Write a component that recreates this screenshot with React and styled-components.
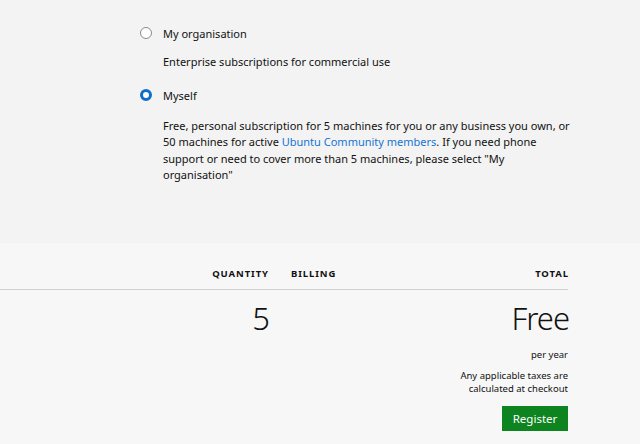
import React from "react";
import styled, { createGlobalStyle } from "styled-components";

const GlobalStyle = createGlobalStyle`
  html, body {
    margin: 0;
    padding: 0;
    background: #f7f7f7;
    font-family: "Noto Sans", "Open Sans", sans-serif;
    color: #111;
  }
`;

const App = () => {
  return (
    <>
      <GlobalStyle />
      <Page>
        <ChoiceSection>
          <Choice>
            <Radio checked={false} />
            <ChoiceLabel>My organisation</ChoiceLabel>
          </Choice>
          <ChoiceText gap="11px 0 18px">
            Enterprise subscriptions for commercial use
          </ChoiceText>
          <Choice>
            <Radio checked />
            <ChoiceLabel>Myself</ChoiceLabel>
          </Choice>
          <ChoiceText gap="13px 0 0">
            Free, personal subscription for 5 machines for you or any business
            you own, or 50 machines for active{" "}
            <Link href="#">Ubuntu Community members</Link>. If you need phone
            support or need to cover more than 5 machines, please select "My
            organisation"
          </ChoiceText>
        </ChoiceSection>
        <SummarySection>
          <SummaryGrid>
            <HeadCell />
            <HeadCell align="right">Quantity</HeadCell>
            <HeadCell>Billing</HeadCell>
            <HeadCell align="right">Total</HeadCell>
            <Divider />
            <div />
            <BigValue>5</BigValue>
            <div />
            <TotalCol>
              <BigValue>Free</BigValue>
              <PerYear>per year</PerYear>
              <TaxNote>
                Any applicable taxes are
                <br />
                calculated at checkout
              </TaxNote>
              <RegisterBtn>Register</RegisterBtn>
            </TotalCol>
          </SummaryGrid>
        </SummarySection>
      </Page>
    </>
  );
};

const Page = styled.main`
  width: 640px;
  height: 444px;
  overflow: hidden;
`;
const ChoiceSection = styled.section`
  background: #f3f3f3;
  padding: 26px 0 0 163px;
  height: 243px;
  box-sizing: border-box;
`;
const Choice = styled.label`
  position: relative;
  display: block;
  font-size: 11px;
  line-height: 16.5px;
`;
const Radio = styled.span`
  position: absolute;
  left: -23px;
  top: 1px;
  width: 12px;
  height: 12px;
  box-sizing: border-box;
  border-radius: 50%;
  background: #fff;
  border: ${({ checked }) =>
    checked ? "3.5px solid #0f6ec8" : "1px solid #8a8a8a"};
`;
const ChoiceLabel = styled.span``;
const ChoiceText = styled.p`
  margin: ${({ gap }) => gap};
  font-size: 11px;
  line-height: 16.5px;
  max-width: 410px;
`;
const Link = styled.a`
  color: #1574d4;
  text-decoration: none;
`;
const SummarySection = styled.section`
  background: #f7f7f7;
  padding-top: 23px;
`;
const SummaryGrid = styled.div`
  display: grid;
  width: 568px;
  grid-template-columns: 177px 68px 1fr auto;
  column-gap: 23px;
`;
const HeadCell = styled.div`
  font-size: 9.5px;
  font-weight: 700;
  letter-spacing: 0.9px;
  text-transform: uppercase;
  text-align: ${({ align }) => align || "left"};
  line-height: 16px;
  padding-bottom: 7px;
  margin-right: ${({ align }) => (align === "right" ? "-0.9px" : "0")};
`;
const Divider = styled.div`
  grid-column: 1 / -1;
  height: 1px;
  background: #d0d0d0;
`;
const BigValue = styled.div`
  font-size: 31px;
  font-weight: 300;
  letter-spacing: -1px;
  margin-right: -1px;
  line-height: 40px;
  margin-top: 7.5px;
  text-align: right;
`;
const TotalCol = styled.div`
  display: flex;
  flex-direction: column;
  align-items: flex-end;
  text-align: right;
`;
const PerYear = styled.div`
  font-size: 9.5px;
  line-height: 14px;
  margin-top: 10px;
`;
const TaxNote = styled.div`
  font-size: 9.5px;
  line-height: 13px;
  margin-top: 7px;
`;
const RegisterBtn = styled.button`
  margin-top: 11.5px;
  height: 25px;
  width: 66px;
  border: none;
  background: #0e8420;
  color: #fff;
  font-family: inherit;
  font-size: 11.5px;
  padding: 0;
  cursor: pointer;
`;

export default App;
